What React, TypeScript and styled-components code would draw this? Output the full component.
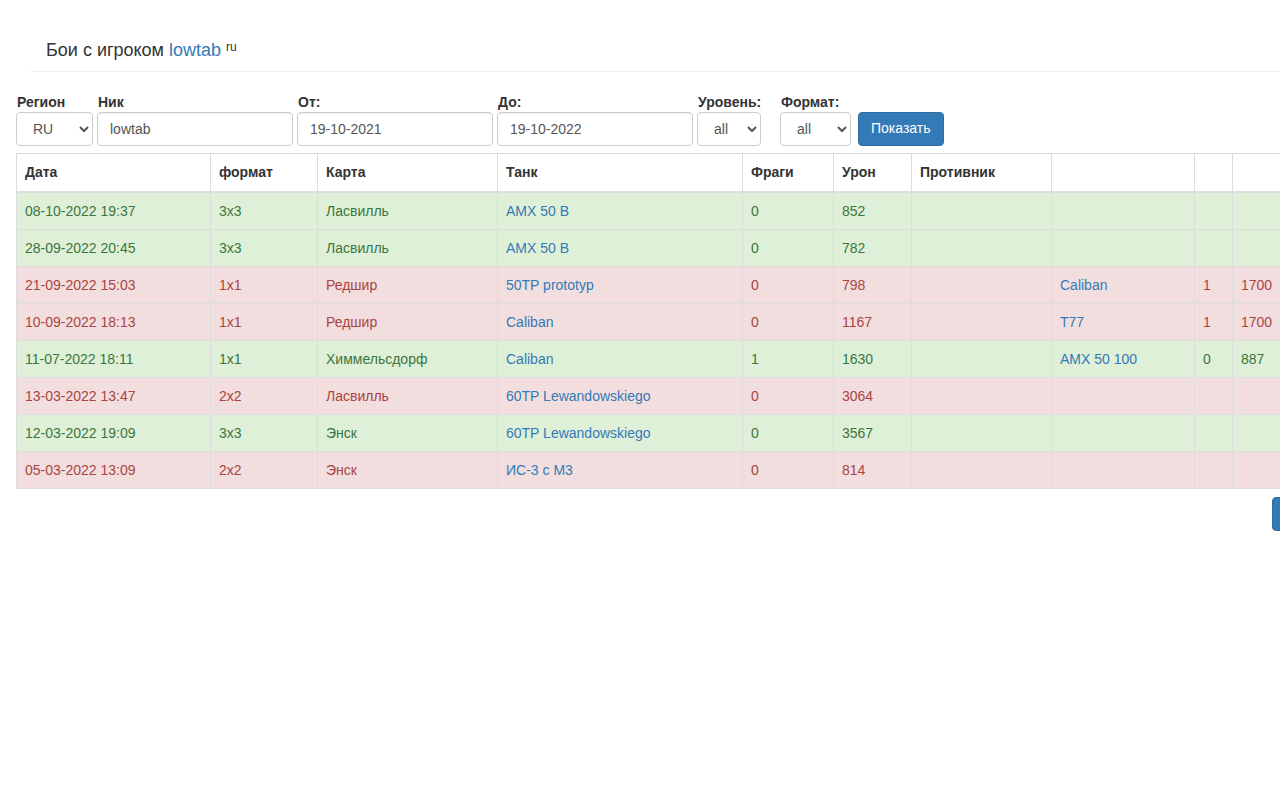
import React from 'react';
import styled, { createGlobalStyle } from 'styled-components';

const GlobalStyle = createGlobalStyle`
  html, body {
    margin: 0;
    padding: 0;
    overflow-x: hidden;
    background: #fff;
  }
  body {
    font-family: "Liberation Sans", Arial, sans-serif;
    font-size: 14px;
    line-height: 1.42857;
    color: #333;
  }
  * { box-sizing: border-box; }
`;

const Page = styled.div`
  width: 1339px;
  padding: 0 0 0 16px;
`;

const PageHeader = styled.h1`
  margin: 0 0 20px 15px;
  padding: 40px 0 11px 15px;
  font-size: 18px;
  font-weight: normal;
  line-height: 20px;
  border-bottom: 1px solid #eee;
`;

const Link = styled.a`
  color: #337ab7;
  text-decoration: none;
`;

const Sup = styled.sup`
  font-size: 12px;
  margin-left: 5px;
  vertical-align: 5px;
  line-height: 0;
`;

const Filters = styled.form`
  display: flex;
  align-items: flex-end;
  gap: 4px;
`;

const Group = styled.div<{ $w: number; $ml?: number }>`
  display: flex;
  flex-direction: column;
  width: ${(p) => p.$w}px;
  margin-left: ${(p) => p.$ml ?? 0}px;
`;

const Label = styled.label`
  font-weight: bold;
  line-height: 20px;
  padding-left: 1px;
  white-space: nowrap;
`;

const Input = styled.input`
  height: 34px;
  width: 100%;
  padding: 6px 12px;
  font: inherit;
  color: #555;
  border: 1px solid #ccc;
  border-radius: 4px;
  background: #fff;
  box-shadow: inset 0 1px 1px rgba(0, 0, 0, 0.075);
`;

const Select = styled.select`
  height: 34px;
  width: 100%;
  padding: 6px 8px 6px 12px;
  font: inherit;
  color: #555;
  border: 1px solid #ccc;
  border-radius: 4px;
  background: #fff;
`;

const Button = styled.button<{ $ml?: number }>`
  height: 34px;
  padding: 6px 12px;
  margin-left: ${(p) => p.$ml ?? 0}px;
  font: inherit;
  color: #fff;
  background: #337ab7;
  border: 1px solid #2e6da4;
  border-radius: 4px;
  white-space: nowrap;
`;

const Table = styled.table`
  margin-top: 7px;
  width: 1320px;
  border-collapse: collapse;
  table-layout: fixed;
  border: 1px solid #ddd;
`;

const Th = styled.th`
  text-align: left;
  padding: 8px 8px 9px;
  line-height: 20px;
  border: 1px solid #ddd;
  border-bottom: 2px solid #ddd;
  font-weight: bold;
  background: #fff;
`;

const Row = styled.tr<{ $win: boolean }>`
  background: ${(p) => (p.$win ? '#dff0d8' : '#f2dede')};
  color: ${(p) => (p.$win ? '#3c763d' : '#a94442')};
`;

const Td = styled.td`
  padding: 8px;
  line-height: 20px;
  border: 1px solid #ddd;
  white-space: nowrap;
  overflow: hidden;
`;

const Footer = styled.div`
  display: flex;
  justify-content: flex-end;
  margin-top: 8px;
`;

const widths = [194, 107, 180, 245, 91, 78, 140, 143, 38, 104];
const headers = ['Дата', 'формат', 'Карта', 'Танк', 'Фраги', 'Урон', 'Противник', '', '', ''];

type Battle = {
  date: string;
  format: string;
  map: string;
  tank: string;
  frags: number;
  damage: number;
  win: boolean;
  enemy?: string;
  enemyFrags?: number;
  enemyDamage?: number;
};

const battles: Battle[] = [
  { date: '08-10-2022 19:37', format: '3x3', map: 'Ласвилль', tank: 'AMX 50 B', frags: 0, damage: 852, win: true },
  { date: '28-09-2022 20:45', format: '3x3', map: 'Ласвилль', tank: 'AMX 50 B', frags: 0, damage: 782, win: true },
  { date: '21-09-2022 15:03', format: '1x1', map: 'Редшир', tank: '50TP prototyp', frags: 0, damage: 798, win: false, enemy: 'Caliban', enemyFrags: 1, enemyDamage: 1700 },
  { date: '10-09-2022 18:13', format: '1x1', map: 'Редшир', tank: 'Caliban', frags: 0, damage: 1167, win: false, enemy: 'T77', enemyFrags: 1, enemyDamage: 1700 },
  { date: '11-07-2022 18:11', format: '1x1', map: 'Химмельсдорф', tank: 'Caliban', frags: 1, damage: 1630, win: true, enemy: 'AMX 50 100', enemyFrags: 0, enemyDamage: 887 },
  { date: '13-03-2022 13:47', format: '2x2', map: 'Ласвилль', tank: '60TP Lewandowskiego', frags: 0, damage: 3064, win: false },
  { date: '12-03-2022 19:09', format: '3x3', map: 'Энск', tank: '60TP Lewandowskiego', frags: 0, damage: 3567, win: true },
  { date: '05-03-2022 13:09', format: '2x2', map: 'Энск', tank: 'ИС-3 с М3', frags: 0, damage: 814, win: false },
];

export default function App() {
  return (
    <Page>
      <GlobalStyle />
      <PageHeader>
        Бои с игроком <Link href="#">lowtab</Link>
        <Sup>ru</Sup>
      </PageHeader>

      <Filters onSubmit={(e) => e.preventDefault()}>
        <Group $w={77}>
          <Label>Регион</Label>
          <Select defaultValue="RU">
            <option>RU</option>
            <option>EU</option>
            <option>NA</option>
          </Select>
        </Group>
        <Group $w={196}>
          <Label>Ник</Label>
          <Input defaultValue="lowtab" />
        </Group>
        <Group $w={196}>
          <Label>От:</Label>
          <Input defaultValue="19-10-2021" />
        </Group>
        <Group $w={196}>
          <Label>До:</Label>
          <Input defaultValue="19-10-2022" />
        </Group>
        <Group $w={64}>
          <Label>Уровень:</Label>
          <Select defaultValue="all">
            <option>all</option>
          </Select>
        </Group>
        <Group $w={71} $ml={15}>
          <Label>Формат:</Label>
          <Select defaultValue="all">
            <option>all</option>
          </Select>
        </Group>
        <Button type="submit" $ml={3}>
          Показать
        </Button>
      </Filters>

      <Table>
        <colgroup>
          {widths.map((w, i) => (
            <col key={i} style={{ width: w }} />
          ))}
        </colgroup>
        <thead>
          <tr>
            {headers.map((h, i) => (
              <Th key={i}>{h}</Th>
            ))}
          </tr>
        </thead>
        <tbody>
          {battles.map((b, i) => (
            <Row key={i} $win={b.win}>
              <Td>{b.date}</Td>
              <Td>{b.format}</Td>
              <Td>{b.map}</Td>
              <Td>
                <Link href="#">{b.tank}</Link>
              </Td>
              <Td>{b.frags}</Td>
              <Td>{b.damage}</Td>
              <Td />
              <Td>{b.enemy && <Link href="#">{b.enemy}</Link>}</Td>
              <Td>{b.enemyFrags ?? ''}</Td>
              <Td>{b.enemyDamage ?? ''}</Td>
            </Row>
          ))}
        </tbody>
      </Table>

      <Footer>
        <Button type="button">Далее</Button>
      </Footer>
    </Page>
  );
}
